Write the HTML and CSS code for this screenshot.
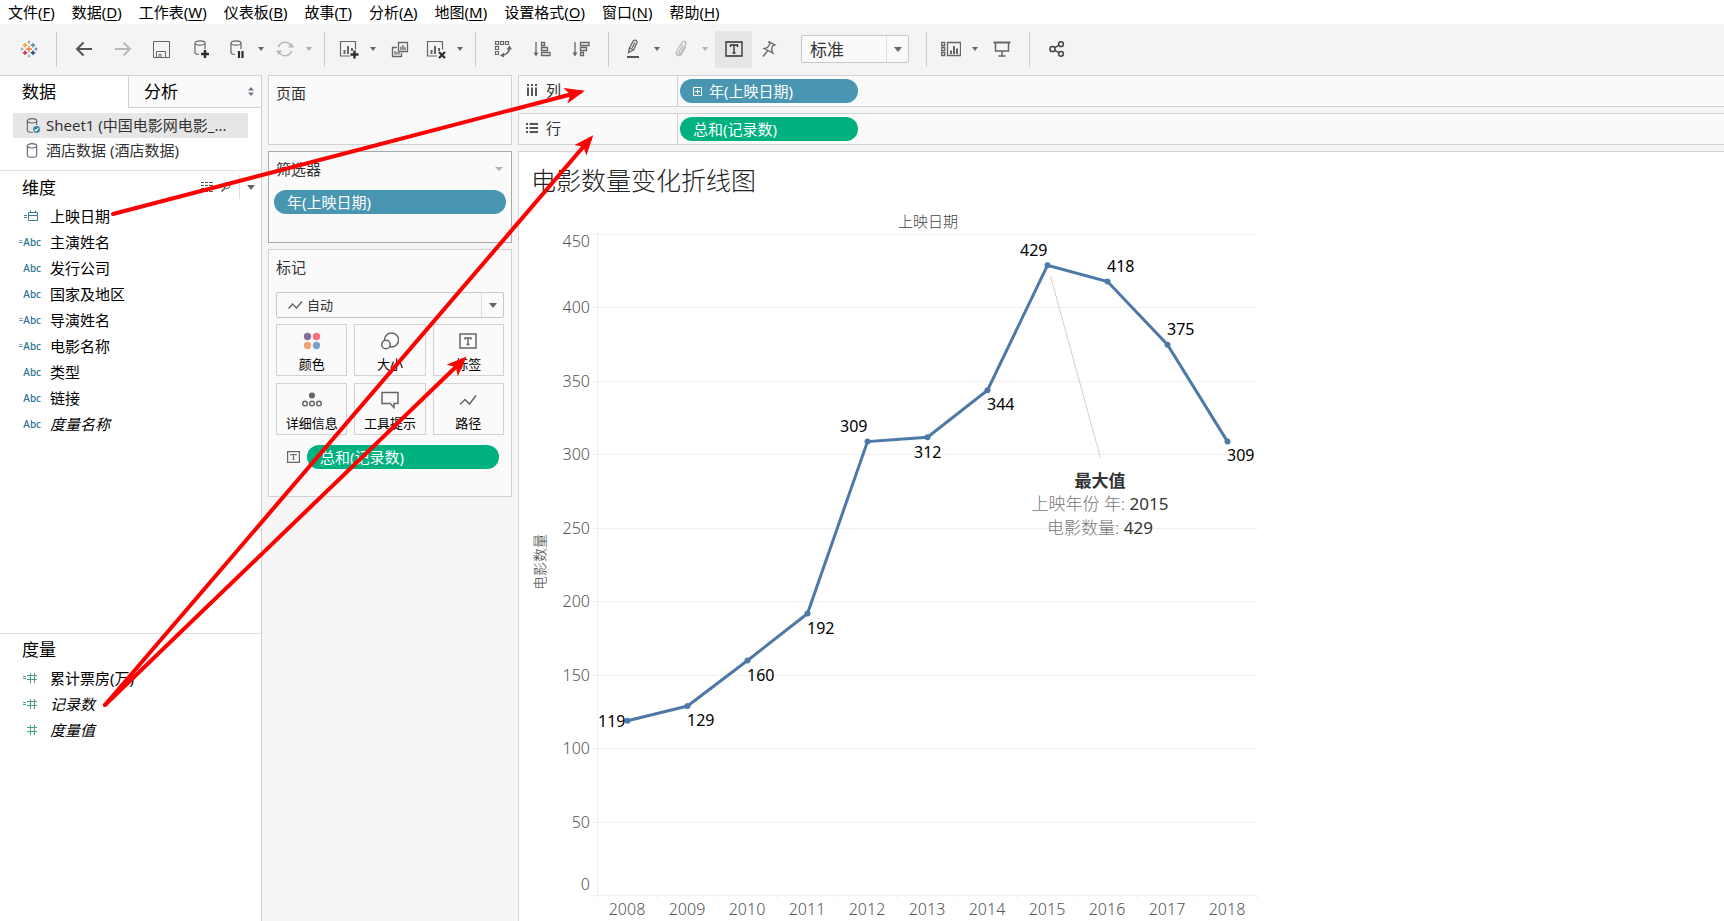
FILE: index.html
```
<!DOCTYPE html>
<html lang="zh-CN">
<head>
<meta charset="utf-8">
<title>电影数量变化折线图</title>
<link rel="stylesheet" href="styles.css">
</head>
<body>
<svg class="defs" aria-hidden="true">
  <symbol id="cyl" viewBox="0 0 12 16"><path d="M1 3v10c0 3 10 3 10 0V3" /><ellipse cx="6" cy="3" rx="5" ry="2.3"/></symbol>
  <symbol id="calendar" viewBox="0 0 17 12"><path d="M0 5.500h3M0 7.500h3M4.500 2.500h9v8h-9zM4.500 5.500h9M6.500 0.500v2M11.500 0.500v2"/></symbol>
  <symbol id="hash" viewBox="0 0 14 12"><path d="M3.500 1v10M7.500 1v10M0 3.500h10M0 7.500h10"/></symbol>
  <symbol id="hash-calc" viewBox="0 0 18 12"><path d="M0 4.500h3M0 6.500h3M7.500 1v10M11.500 1v10M4 3.500h10M4 7.500h10"/></symbol>
</svg>

<nav class="menubar">
  <button>文件(<u>F</u>)</button><button>数据(<u>D</u>)</button><button>工作表(<u>W</u>)</button><button>仪表板(<u>B</u>)</button><button>故事(<u>T</u>)</button><button>分析(<u>A</u>)</button><button>地图(<u>M</u>)</button><button>设置格式(<u>O</u>)</button><button>窗口(<u>N</u>)</button><button>帮助(<u>H</u>)</button>
</nav>

<div class="toolbar">
  <button class="tool wide" aria-label="开始页">
    <svg width="18" height="18" viewBox="0 0 18 18" fill="none" stroke-width="1.4"><path stroke="#eb7f33" d="M9 6v6M6 9h6"/><path stroke="#eba03c" d="M5 3v4.500M2.800 5.200h4.500"/><path stroke="#59879b" d="M13 3v4.500M10.700 5.200h4.500"/><path stroke="#c9284d" d="M5 10.500v4.500M2.800 12.800h4.500"/><path stroke="#1f447e" d="M13 10.500v4.500M10.700 12.800h4.500"/><path stroke="#8aa6b5" stroke-width="1.200" d="M9 .5v3M7.500 2h3M9 14.500v3M7.500 16h3M2 7.500v3M.5 9h3"/><path stroke="#6b6fa6" stroke-width="1.200" d="M16 7.500v3M14.500 9h3"/></svg>
  </button>
  <span class="sep"></span>
  <button class="tool wide" aria-label="撤消"><svg width="18" height="16" viewBox="0 0 18 16" stroke="#555" stroke-width="2"><path d="M17 8H2M8.500 1.500L2 8l6.500 6.500"/></svg></button>
  <button class="tool wide" aria-label="重做"><svg width="18" height="16" viewBox="0 0 18 16" stroke="#b8b8b8" stroke-width="2"><path d="M1 8h15M9.500 1.500L16 8l-6.500 6.500"/></svg></button>
  <button class="tool wide" aria-label="保存"><svg width="17" height="17" viewBox="0 0 17 17" stroke="#666" stroke-width="1"><path d="M.5.500h16v16H.5zM3.500 16.500v-6h9v6M6 16.500v-3h2v3"/></svg></button>
  <button class="tool wide" aria-label="新建数据源"><svg width="18" height="20" viewBox="0 0 18 20"><path stroke-width="1.200" d="M3 4.500v9c0 1.200 1.600 1.800 4 2M13 4.500V10"/><ellipse cx="8" cy="4" rx="5" ry="2.200" stroke-width="1.200"/><path stroke="#2d2d2d" stroke-width="2.400" d="M13 11v8M9 15h8"/></svg></button>
  <button class="tool" aria-label="暂停自动更新"><svg width="18" height="20" viewBox="0 0 18 20"><path stroke-width="1.200" d="M3 4.500v9c0 1.200 1.600 1.800 4 2M13 4.500V10"/><ellipse cx="8" cy="4" rx="5" ry="2.200" stroke-width="1.200"/><path stroke="#2d2d2d" stroke-width="2.200" d="M11 12v7M14.500 12v7"/></svg></button>
  <button class="caret" aria-label="更多"></button>
  <button class="tool" aria-label="运行更新"><svg width="18" height="16" viewBox="0 0 18 16" stroke="#b8b8b8" stroke-width="1.500"><path d="M2.500 6A6.800 6.800 0 0 1 15 5M15.500 10A6.800 6.800 0 0 1 3 11"/><path fill="#b8b8b8" stroke="none" d="M12 6.500h6L15.500 2zM0 9.500h6L2.800 14z"/></svg></button>
  <button class="caret faint" aria-label="更多"></button>
  <span class="sep"></span>
  <button class="tool" aria-label="新建工作表"><svg width="20" height="20" viewBox="0 0 20 20"><path stroke-width="1.200" d="M11 17H1.500V2.500h15v8"/><path stroke-width="2" d="M5.500 11v4M9 7v8M13 9v3"/><path stroke="#2d2d2d" stroke-width="2.400" d="M15.500 11.500v8M11.500 15.500h8"/></svg></button>
  <button class="caret" aria-label="更多"></button>
  <button class="tool wide" aria-label="复制工作表"><svg width="18" height="17" viewBox="0 0 18 17"><path stroke-width="1.300" d="M7.500 1.500h9v9h-9zM6 6.500H1.500v9h9V12M10 5.500V9M12 4v5M14 6v3M4 10v3.500M6 11v2.500M8 11.500v2"/></svg></button>
  <button class="tool" aria-label="清除工作表"><svg width="20" height="20" viewBox="0 0 20 20"><path stroke-width="1.200" d="M11 17H1.500V2.500h15v8"/><path stroke-width="2" d="M5.500 11v4M9 7v8M13 9v3"/><path stroke="#2d2d2d" stroke-width="2.200" d="M13 13l6 6M19 13l-6 6"/></svg></button>
  <button class="caret" aria-label="更多"></button>
  <span class="sep"></span>
  <button class="tool wide" aria-label="交换行和列"><svg width="18" height="18" viewBox="0 0 18 18" stroke-width="1.200"><path d="M1.500 1.500h3v3h-3zM6.500 1.500h3v3h-3zM11.500 1.500h3v3h-3zM1.500 6.500h3v3h-3zM1.500 11.500h3v3h-3z"/><path stroke-width="1.500" d="M15.500 8c0 4-3.500 7-7.500 7.500"/><path fill="#666" stroke="none" d="M12.500 9.500L15.500 5.500l2.500 4zM10 12.500v5L6 15.500z"/></svg></button>
  <button class="tool wide" aria-label="升序"><svg width="18" height="17" viewBox="0 0 18 17" stroke-width="1.300"><path d="M3 1v12M8.500 1.500h3v3h-3zM8.500 6.500h6v3h-6zM8.500 11.500H17v3H8.500z"/><path fill="#666" stroke="none" d="M.5 11.500h5L3 15.500z"/></svg></button>
  <button class="tool wide" aria-label="降序"><svg width="18" height="17" viewBox="0 0 18 17" stroke-width="1.300"><path d="M3 1v12M8.500 1.500H17v3H8.500zM8.500 6.500h6v3h-6zM8.500 11.500h3v3h-3z"/><path fill="#666" stroke="none" d="M.5 11.500h5L3 15.500z"/></svg></button>
  <span class="sep"></span>
  <button class="tool" aria-label="突出显示"><svg width="16" height="20" viewBox="0 0 16 20"><path stroke-width="1.300" d="M8.500 1.500c2-1 4 0 3.500 2L8.500 11 4.500 9zM4.500 9l-1 4.500 5-2.500M10 3.500L7 9"/><path stroke="#555" stroke-width="2" d="M2 18h12"/></svg></button>
  <button class="caret" aria-label="更多"></button>
  <button class="tool" aria-label="组成员"><svg width="16" height="18" viewBox="0 0 16 18" stroke="#b8b8b8" stroke-width="1.300"><path d="M10 5L6 12c-.8 2 1 2.700 2 1l4.500-8c1.500-3.500-2-4.800-3.700-2L4 10.500c-2.200 4.200 1.800 7 4.500 3.500L12.500 7"/></svg></button>
  <button class="caret faint" aria-label="更多"></button>
  <button class="tool active" aria-label="显示标记标签"><svg width="18" height="16" viewBox="0 0 18 16" stroke="#2d2d2d" stroke-width="1.300"><path d="M1 1h16v14H1zM5.500 6V4h7v2M9 4v8M7.500 12h3"/></svg></button>
  <button class="tool" aria-label="固定轴"><svg width="16" height="18" viewBox="0 0 16 18" stroke-width="1.300"><path d="M7.500 1.500l6.500 3.500-2.500 1-1 4 1.500 3-9-4.500 3.500-1 2.500-4zM6.500 11L2 16.500"/></svg></button>
  <div class="select fit">
    <select aria-label="适合"><option>标准</option></select><span class="drop"></span>
  </div>
  <span class="sep last"></span>
  <button class="tool" aria-label="显示隐藏卡"><svg width="20" height="16" viewBox="0 0 20 16" stroke-width="1.300"><path d="M.7 1.500h3v3h-3zM.7 6.500h3v3h-3zM.7 11.500h3v3h-3zM6.500 1.500h13v13h-13z"/><path stroke-width="2" d="M10 9.500V13M13 5v8M16 7.500V13"/></svg></button>
  <button class="caret" aria-label="更多"></button>
  <button class="tool wide" aria-label="演示模式"><svg width="18" height="16" viewBox="0 0 18 16"><path stroke-width="2" d="M.5 1.500h17"/><path d="M2.500 2v8h13V2M9 10v5M5.500 15h7"/></svg></button>
  <span class="sep"></span>
  <button class="tool wide" aria-label="共享"><svg width="16" height="16" viewBox="0 0 16 16" stroke="#444"><circle cx="3.500" cy="8" r="2.600"/><circle cx="12" cy="3.200" r="2.400"/><circle cx="12" cy="12.800" r="2.400"/><path d="M5.800 6.700l4-2.300M5.800 9.300l4 2.300"/></svg></button>
</div>

<main class="workspace">
  <aside class="datapane">
    <div class="tabs">
      <button class="tab on">数据</button>
      <button class="tab">分析<svg width="6" height="9" viewBox="0 0 6 9"><path d="M0 3.500L3 0l3 3.500zM0 5.500L3 9l3-3.500z"/></svg></button>
    </div>
    <ul class="sources">
      <li class="source chosen"><svg class="line" width="15" height="16" viewBox="0 0 15 16"><use href="#cyl" width="12" height="15"/><circle cx="10.500" cy="11.500" r="4" fill="#3a80a3" stroke="#e6e6e6"/><path stroke="#fff" d="M8.700 11.500l1.300 1.300 2.300-2.500"/></svg><span>Sheet1 (中国电影网电影_...</span></li>
      <li class="source"><svg class="line" width="15" height="16" viewBox="0 0 15 16"><use href="#cyl" width="12" height="15"/></svg><span>酒店数据 (酒店数据)</span></li>
    </ul>
    <section class="fields dims">
      <header class="fields-head">
        <h2>维度</h2>
        <button aria-label="查看数据"><svg width="12" height="10" viewBox="0 0 12 10"><path d="M0 .5h3M4 .5h3M8 .5h4M0 3.500h3M4 3.500h3M8 3.500h4M0 6.500h3M4 6.500h3M8 6.500h4M0 9.500h3M4 9.500h3M8 9.500h4"/></svg></button>
        <button aria-label="查找字段"><svg width="10" height="10" viewBox="0 0 10 10"><circle cx="6" cy="3.500" r="3"/><path stroke-width="1.500" d="M4 6L.5 9.500"/></svg></button>
        <button class="caret fields-menu" aria-label="维度菜单"></button>
      </header>
      <ul>
        <li><i class="kind"><svg class="dim" width="17" height="12"><use href="#calendar"/></svg></i>上映日期</li>
        <li><i class="kind"><small>=</small>Abc</i>主演姓名</li>
        <li><i class="kind">Abc</i>发行公司</li>
        <li><i class="kind">Abc</i>国家及地区</li>
        <li><i class="kind"><small>=</small>Abc</i>导演姓名</li>
        <li><i class="kind"><small>=</small>Abc</i>电影名称</li>
        <li><i class="kind">Abc</i>类型</li>
        <li><i class="kind">Abc</i>链接</li>
        <li><i class="kind">Abc</i><em>度量名称</em></li>
      </ul>
    </section>
    <section class="fields measures">
      <header class="fields-head"><h2>度量</h2></header>
      <ul>
        <li><i class="kind"><svg class="mea" width="18" height="12"><use href="#hash-calc"/></svg></i>累计票房(万)</li>
        <li><i class="kind"><svg class="mea" width="18" height="12"><use href="#hash-calc"/></svg></i><em>记录数</em></li>
        <li><i class="kind"><svg class="mea" width="14" height="12"><use href="#hash"/></svg></i><em>度量值</em></li>
      </ul>
    </section>
  </aside>

  <div class="cards">
    <section class="card pages"><h3>页面</h3></section>
    <section class="card filters">
      <h3>筛选器<span class="caret grey"></span></h3>
      <button class="pill blue">年(上映日期)</button>
    </section>
    <section class="card marks">
      <h3>标记</h3>
      <div class="select marktype">
        <svg class="line" width="15" height="10" viewBox="0 0 15 10"><path d="M.5 8.500L4.500 4l4 4L14 1.500"/></svg>
        <select aria-label="标记类型"><option>自动</option></select><span class="drop"></span>
      </div>
      <div class="markgrid">
        <button><svg width="18" height="18" viewBox="0 0 18 18"><circle cx="4.500" cy="4.500" r="3.700" fill="#83709b"/><circle cx="13.500" cy="4.500" r="3.700" fill="#fb6f82"/><circle cx="4.500" cy="13.500" r="3.700" fill="#f2a173"/><circle cx="13.500" cy="13.500" r="3.700" fill="#7ba2cc"/></svg>颜色</button>
        <button><svg class="line" width="18" height="18" viewBox="0 0 18 18"><circle cx="10.500" cy="8" r="7"/><circle cx="5" cy="12.500" r="4.300" fill="#fafafa"/></svg>大小</button>
        <button><svg class="line" width="18" height="18" viewBox="0 0 18 18"><path d="M1 2h16v14H1zM6 7.500V6h6v1.500M9 6v6.500M7.500 12.500h3"/></svg>标签</button>
        <button><svg class="line" width="20" height="18" viewBox="0 0 20 18"><circle cx="10" cy="4.500" r="2.300" fill="#666"/><circle cx="3" cy="12.500" r="2.300"/><circle cx="10" cy="12.500" r="2.300"/><circle cx="17" cy="12.500" r="2.300"/></svg>详细信息</button>
        <button><svg class="line" width="18" height="18" viewBox="0 0 18 18"><path d="M1 1.500h16v11h-4v4l-4-4H1z"/></svg>工具提示</button>
        <button><svg class="line" width="18" height="18" viewBox="0 0 18 18"><path d="M1 13.500L6 8.500l4.500 4.500L17 4.500"/></svg>路径</button>
      </div>
      <div class="encoding">
        <svg class="line" width="13" height="12" viewBox="0 0 13 12"><path stroke-width="1.200" d="M.6.600h11.800v10.800H.6zM4 4.500V3.500h5v1M6.500 3.500v5M5.500 8.500h2"/></svg>
        <button class="pill green">总和(记录数)</button>
      </div>
    </section>
  </div>

  <div class="view">
    <div class="shelf">
      <div class="shelf-name"><svg width="12" height="13" viewBox="0 0 12 13"><path stroke-width="2" d="M2 0v2M6 0v2M10 0v2M2 3.500V12M6 3.500V12M10 3.500V12"/></svg>列</div>
      <button class="pill blue"><svg width="9" height="9" viewBox="0 0 9 9"><path d="M.5.500h8v8h-8zM4.500 2v5M2 4.500h5"/></svg>年(上映日期)</button>
    </div>
    <div class="shelf">
      <div class="shelf-name"><svg width="12" height="13" viewBox="0 0 12 13"><path stroke-width="2" d="M0 2h2M0 6h2M0 10h2M3.500 2H12M3.500 6H12M3.500 10H12"/></svg>行</div>
      <button class="pill green">总和(记录数)</button>
    </div>
    <section class="sheet">
      <h1>电影数量变化折线图</h1>
      <svg class="chart" width="740" height="718" viewBox="519 203 740 718" role="img" aria-label="电影数量变化折线图">
        <path class="grid" d="M592 234.500h666M592 307.500h666M592 381.500h666M592 454.500h666M592 528.500h666M592 601.500h666M592 675.500h666M592 748.500h666M592 822.500h666M592 895.500h666M597.500 231v668M657.500 895v4M717.500 895v4M777.500 895v4M837.500 895v4M897.500 895v4M957.500 895v4M1017.500 895v4M1077.500 895v4M1137.500 895v4M1197.500 895v4M1257.500 895v4"/>
        <text class="axis-title" x="928" y="227">上映日期</text>
        <text class="axis-title side" transform="translate(545 562) rotate(-90)">电影数量</text>
        <g class="ticks-y"><text x="590" y="247">450</text><text x="590" y="313">400</text><text x="590" y="387">350</text><text x="590" y="460">300</text><text x="590" y="534">250</text><text x="590" y="607">200</text><text x="590" y="681">150</text><text x="590" y="754">100</text><text x="590" y="828">50</text><text x="590" y="890">0</text></g>
        <g class="ticks-x"><text x="627" y="915">2008</text><text x="687" y="915">2009</text><text x="747" y="915">2010</text><text x="807" y="915">2011</text><text x="867" y="915">2012</text><text x="927" y="915">2013</text><text x="987" y="915">2014</text><text x="1047" y="915">2015</text><text x="1107" y="915">2016</text><text x="1167" y="915">2017</text><text x="1227" y="915">2018</text></g>
        <path class="leader" d="M1050.500 276l50 182"/>
        <polyline class="series" points="627.500,720.700 687.500,706 747.500,660.500 807.500,613.500 867.500,441.600 927.500,437.200 987.500,390.200 1047.500,265.300 1107.500,281.500 1167.500,344.700 1227.500,441.600"/>
        <g class="dots"><circle cx="627.500" cy="720.700" r="3"/><circle cx="687.500" cy="706" r="3"/><circle cx="747.500" cy="660.500" r="3"/><circle cx="807.500" cy="613.500" r="3"/><circle cx="867.500" cy="441.600" r="3"/><circle cx="927.500" cy="437.200" r="3"/><circle cx="987.500" cy="390.200" r="3"/><circle cx="1047.500" cy="265.300" r="3"/><circle cx="1107.500" cy="281.500" r="3"/><circle cx="1167.500" cy="344.700" r="3"/><circle cx="1227.500" cy="441.600" r="3"/></g>
        <g class="values"><text x="598" y="727">119</text><text x="687" y="726">129</text><text x="747" y="681">160</text><text x="807" y="634">192</text><text x="840" y="432">309</text><text x="914" y="458">312</text><text x="987" y="410">344</text><text x="1020" y="256">429</text><text x="1107" y="272">418</text><text x="1167" y="335">375</text><text x="1227" y="461">309</text></g>
        <g class="note"><text class="strong" x="1100" y="487">最大值</text><text x="1100" y="510">上映年份 年: <tspan>2015</tspan></text><text x="1100" y="534">电影数量: <tspan>429</tspan></text></g>
      </svg>
    </section>
  </div>
</main>

<svg class="arrows" aria-hidden="true">
  <defs><marker id="head" markerUnits="userSpaceOnUse" markerWidth="22" markerHeight="18" refX="15" refY="8" orient="auto"><path d="M20 8L0 0l5 8-5 8z"/></marker></defs>
  <path d="M113 214L580 92" marker-end="url(#head)"/>
  <path d="M105 705L590 139" marker-end="url(#head)"/>
  <path d="M105 705L463 360" marker-end="url(#head)"/>
</svg>
</body>
</html>
```
FILE: styles.css
```
* { box-sizing: border-box; }
body {
  margin: 0;
  height: 100vh;
  display: flex;
  flex-direction: column;
  position: relative;
  overflow: hidden;
  background: #f5f5f5;
  color: #000;
  font: 15px/24px "Noto Sans", "Noto Sans CJK SC", sans-serif;
}
button, select { font: inherit; color: inherit; border: 0; padding: 0; margin: 0; background: none; }
ul { list-style: none; margin: 0; padding: 0; }
h1, h2, h3 { margin: 0; font-weight: 400; }
.defs { position: absolute; width: 0; height: 0; }

.menubar { display: flex; gap: 17px; height: 24px; padding-left: 8px; background: #fff; white-space: nowrap; }
.menubar u { text-underline-offset: 2px; }

.toolbar { display: flex; align-items: center; height: 50px; padding: 0 8px 0 9px; margin-bottom: 1px; background: #f4f4f4; }
.tool { width: 34px; height: 37px; display: flex; align-items: center; justify-content: center; flex: none; }
.tool.wide { width: 39px; }
.tool.active { width: 37px; margin-left: 3px; background: #e6e6e6; }
.tool svg { fill: none; }
.tool svg:not([stroke]) { stroke: #666; }
.tool svg:not([stroke-width]) { stroke-width: 1.5px; }
.sep { width: 1px; height: 35px; margin: 0 7px 0 8px; background: #ccc; flex: none; }
.sep.last { margin-left: 17px; }
.caret { width: 14px; height: 24px; display: flex; align-items: center; justify-content: center; flex: none; }
.caret::after, .drop::after { content: ""; border: 3px solid transparent; border-top: 4px solid #666; border-bottom: 0; }
.caret.faint::after, .caret.grey::after { border-top-color: #b0b0b0; }

.select { display: flex; align-items: center; border: 1px solid #c8c8c8; border-radius: 2px; background: #fafafa; }
.select select { flex: 1; min-width: 0; appearance: none; outline: 0; }
.drop { align-self: stretch; width: 22px; display: flex; align-items: center; justify-content: center; border-left: 1px solid #ddd; }
.drop::after { border-width: 5px 4px 0; }
.fit { width: 108px; height: 28px; margin-left: 15px; font-size: 17px; color: #333; }
.fit select { padding: 1px 0 0 8px; height: 26px; }

.workspace { flex: 1; min-height: 0; display: flex; gap: 6px; }
.datapane { width: 262px; flex: none; display: flex; flex-direction: column; background: #fff; border-right: 1px solid #d2d2d2; }
.tabs { display: flex; height: 33px; font-size: 17px; }
.tab { width: 133px; padding: 0 7px 0 15px; display: flex; align-items: center; justify-content: space-between; background: #fafafa; border: 1px solid #d2d2d2; border-right: 0; }
.tab.on { width: 128px; padding-left: 22px; background: #fff; border-left: 0; border-bottom: 0; }
.tab svg { fill: #6c7480; }
.sources { padding: 5px 13px 7px; border-bottom: 1px solid #e2e2e2; color: #333; }
.source { display: flex; align-items: center; gap: 5px; height: 25px; padding-left: 13px; white-space: nowrap; }
.source span { padding-bottom: 2px; }
.source.chosen { background: #e6e6e6; }
.line { fill: none; stroke: #666; stroke-width: 1.5px; flex: none; }
.source .line { stroke-width: 1.2px; }

.fields-head { display: flex; align-items: center; gap: 8px; height: 32px; padding-left: 22px; }
.fields-head h2 { flex: 1; font-size: 17px; }
.dims .fields-head h2 { padding-top: 2px; }
.fields-head svg { display: block; fill: none; stroke: #555; }
.fields-menu { width: 22px; border-left: 1px solid #ddd; }
.fields-menu::after { border-width: 5px 4px 0; }
.fields li { display: flex; align-items: center; gap: 9px; height: 26px; white-space: nowrap; }
.dims { flex: 1.61 1 0; }
.measures { flex: 1 1 0; border-top: 1px solid #e2e2e2; }
.measures .fields-head { height: 31px; }
.kind { width: 41px; display: flex; align-items: center; justify-content: flex-end; flex: none; font: 500 10px/12px "Noto Sans", sans-serif; color: #2f7391; }
.kind small { font-size: 8px; }
.dim { fill: none; stroke: #3a7d96; }
.mea { fill: none; stroke: #45a27d; }

.cards { width: 244px; flex: none; display: flex; flex-direction: column; gap: 6px; }
.card { background: #fafafa; border: 1px solid #d2d2d2; color: #333; }
.card h3 { display: flex; justify-content: space-between; height: 36px; padding: 5px 4px 0 7px; font-size: 15px; }
.pages { height: 70px; }
.filters { height: 92px; padding: 0 5px; border-color: #aaa; }
.card.filters h3 { padding: 5px 0 0 2px; height: 38px; }
.caret.grey::after { border-width: 4px 4px 0; }
.marks { padding: 0 7px 27px; }
.card.marks h3 { padding: 5px 0 0; height: 42px; }
.pill { display: flex; align-items: center; gap: 7px; width: 100%; height: 24px; padding-left: 13px; border-radius: 12px; color: #fff; text-align: left; }
.pill svg { fill: none; stroke: #fff; }
.blue { background: #4996b2; }
.green { background: #00b180; }
.marktype { height: 26px; padding-left: 11px; gap: 4px; font-size: 13px; }
.marktype select { height: 24px; }
.markgrid { display: grid; grid-template-columns: repeat(3, 1fr); gap: 7px; margin-top: 6px; }
.markgrid button { display: flex; flex-direction: column; align-items: center; gap: 5px; height: 52px; padding-top: 7px; border: 1px solid #d2d2d2; font-size: 13px; line-height: 18px; color: #000; }
.encoding { display: flex; align-items: center; gap: 7px; margin-top: 10px; padding: 0 5px 0 11px; }

.view { flex: 1; min-width: 0; display: flex; flex-direction: column; gap: 6px; }
.shelf { display: flex; align-items: center; gap: 2px; height: 32px; flex: none; background: #fafafa; border: 1px solid #d2d2d2; border-right: 0; }
.shelf-name { display: flex; align-items: center; gap: 8px; width: 159px; height: 30px; padding: 0 0 2px 7px; border-right: 1px solid #d2d2d2; color: #333; }
.shelf-name svg { fill: none; stroke: #555; }
.shelf .pill { width: 178px; }
.sheet { flex: 1; min-height: 0; overflow: hidden; background: #fff; border: 1px solid #d2d2d2; border-width: 1px 0 0 1px; }
.sheet h1 { height: 51px; padding: 9px 0 0 12px; font-size: 25px; line-height: 38px; font-weight: 300; color: #222; }

.chart { display: block; }
.chart text { font-family: "Noto Sans", "Noto Sans CJK SC", sans-serif; }
.grid { fill: none; stroke: #f0f0f0; }
.axis-title { font-size: 15px; font-weight: 300; fill: #444; text-anchor: middle; }
.side { font-size: 14px; }
.ticks-y, .ticks-x { font-size: 16px; font-weight: 300; fill: #555; }
.ticks-y { text-anchor: end; }
.ticks-x { text-anchor: middle; }
.values { font-size: 16px; fill: #000; }
.leader { fill: none; stroke: #d0d0d0; }
.series { fill: none; stroke: #4e79a7; stroke-width: 3px; }
.dots { fill: #4e79a7; }
.note { font-size: 17px; font-weight: 300; text-anchor: middle; fill: #777; }
.note tspan { font-weight: 400; fill: #333; }
.note .strong { font-weight: 700; fill: #333; }

.arrows { position: absolute; inset: 0; width: 100%; height: 100%; pointer-events: none; fill: none; stroke: #f00; stroke-width: 4px; stroke-linecap: round; }
.arrows marker path { fill: #f00; stroke: none; }
```
